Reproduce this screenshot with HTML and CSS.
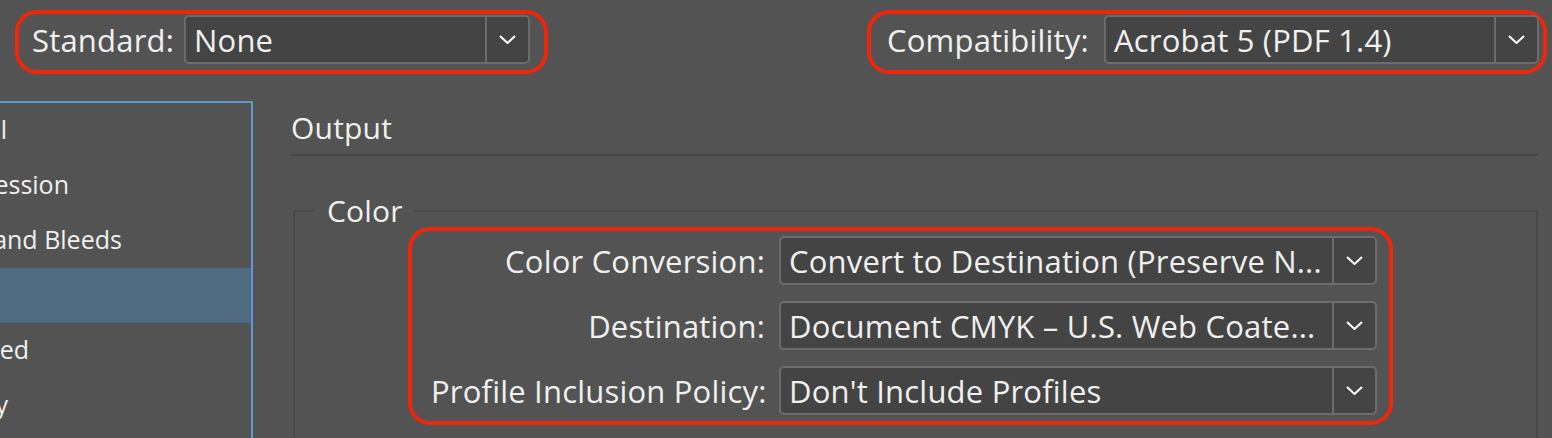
FILE: index.html
```html
<!DOCTYPE html>
<html lang="en">
<head>
<meta charset="utf-8">
<title>Export Adobe PDF</title>
<link rel="stylesheet" href="styles.css">
</head>
<body>
<div class="page">
  <div class="top">
    <div class="group group-standard">
      <span class="label">Standard:</span>
      <div class="select select-standard">
        <span class="value">None</span>
        <span class="btn"><svg width="17" height="9" viewBox="0 0 17 9"><path d="M1 1 L8.5 8 L16 1" fill="none" stroke="#fff" stroke-width="2"/></svg></span>
      </div>
    </div>
    <div class="group group-compat">
      <span class="label">Compatibility:</span>
      <div class="select select-compat">
        <span class="value">Acrobat 5 (PDF 1.4)</span>
        <span class="btn"><svg width="17" height="9" viewBox="0 0 17 9"><path d="M1 1 L8.5 8 L16 1" fill="none" stroke="#fff" stroke-width="2"/></svg></span>
      </div>
    </div>
  </div>
  <div class="main">
    <div class="sidebar">
      <div class="item">General</div>
      <div class="item">Compression</div>
      <div class="item">Marks and Bleeds</div>
      <div class="item selected">Output</div>
      <div class="item">Advanced</div>
      <div class="item">Security</div>
      <div class="item">Summary</div>
    </div>
    <div class="content">
      <div class="heading">Output</div>
      <div class="rule"></div>
      <fieldset class="box">
        <legend>Color</legend>
        <div class="group group-color">
          <div class="row">
            <span class="rlabel">Color Conversion:</span>
            <div class="select select-row">
              <span class="value">Convert to Destination (Preserve N...</span>
              <span class="btn"><svg width="17" height="9" viewBox="0 0 17 9"><path d="M1 1 L8.5 8 L16 1" fill="none" stroke="#fff" stroke-width="2"/></svg></span>
            </div>
          </div>
          <div class="row">
            <span class="rlabel">Destination:</span>
            <div class="select select-row">
              <span class="value">Document CMYK – U.S. Web Coate...</span>
              <span class="btn"><svg width="17" height="9" viewBox="0 0 17 9"><path d="M1 1 L8.5 8 L16 1" fill="none" stroke="#fff" stroke-width="2"/></svg></span>
            </div>
          </div>
          <div class="row">
            <span class="rlabel">Profile Inclusion Policy:</span>
            <div class="select select-row">
              <span class="value">Don't Include Profiles</span>
              <span class="btn"><svg width="17" height="9" viewBox="0 0 17 9"><path d="M1 1 L8.5 8 L16 1" fill="none" stroke="#fff" stroke-width="2"/></svg></span>
            </div>
          </div>
        </div>
      </fieldset>
    </div>
  </div>
</div>
</body>
</html>
```

FILE: styles.css
```css
* { box-sizing: border-box; }
html, body { margin: 0; padding: 0; }
body {
  background: #535353;
  color: #f0f0f0;
  font-family: "Open Sans", "Liberation Sans", sans-serif;
  font-size: 31px;
  letter-spacing: 0.2px;
  width: 1552px;
  height: 438px;
  overflow: hidden;
}
.page { width: 1552px; height: 438px; overflow: hidden; }

.top {
  display: flex;
  justify-content: space-between;
  align-items: flex-start;
  padding: 10px 5px 0 15px;
  height: 101px;
}
.group {
  border: 4px solid #f0260c;
  border-radius: 22px;
}
.group-standard, .group-compat {
  display: flex;
  align-items: center;
  height: 64px;
  padding: 1px 14px 6px 13px;
}
.group-standard { width: 533px; }
.group-compat { width: 680px; padding-left: 16px; padding-right: 4px; }
.label { line-height: 40px; white-space: nowrap; }
.select {
  display: flex;
  align-items: stretch;
  background: #444444;
  border: 2px solid #6c6c6c;
  border-radius: 5px;
  height: 49px;
  margin-left: auto;
  flex: none;
}
.select-standard { width: 346px; }
.select-compat { width: 435px; }
.value {
  flex: 1;
  display: flex;
  align-items: center;
  padding-left: 8px;
  white-space: nowrap;
  overflow: hidden;
}
.btn {
  width: 43px;
  flex: none;
  border-left: 2px solid #6c6c6c;
  display: flex;
  align-items: center;
  justify-content: center;
}
.btn svg { display: block; }

.main { display: flex; align-items: flex-start; }
.sidebar {
  margin-left: -88px;
  width: 341px;
  height: 340px;
  border-top: 2px solid #5a9ad8;
  border-right: 2px solid #5a9ad8;
  font-size: 25px;
  letter-spacing: 0;
  flex: none;
}
.item {
  height: 55px;
  line-height: 52px;
  padding-left: 3px;
  white-space: nowrap;
}
.item.selected { background: #506a82; }

.content {
  margin-left: 38px;
  width: 1247px;
}
.heading { padding-top: 7px; line-height: 40px; height: 47px; font-size: 30px; }
.rule { margin-top: 6px; height: 2px; background: #474747; }
.box {
  margin: 40px 0 0 2px;
  padding: 1px 0 0 0;
  border: 2px solid #4a4a4a;
  border-bottom: none;
  height: 260px;
  min-width: 0;
}
.box legend {
  margin-left: 20px;
  padding: 0 11px 0 12px;
  font-size: 30px;
  line-height: 30px;
}
.group-color {
  margin-left: 113px;
  width: 985px;
  height: 198px;
  padding: 5px 12px 6px 19px;
  display: flex;
  flex-direction: column;
  gap: 16px;
}
.row { display: flex; align-items: center; }
.rlabel { flex: 1; min-width: 0; text-align: right; margin-right: 14px; white-space: nowrap; }
.select-row { width: 598px; margin-left: 0; }
```
